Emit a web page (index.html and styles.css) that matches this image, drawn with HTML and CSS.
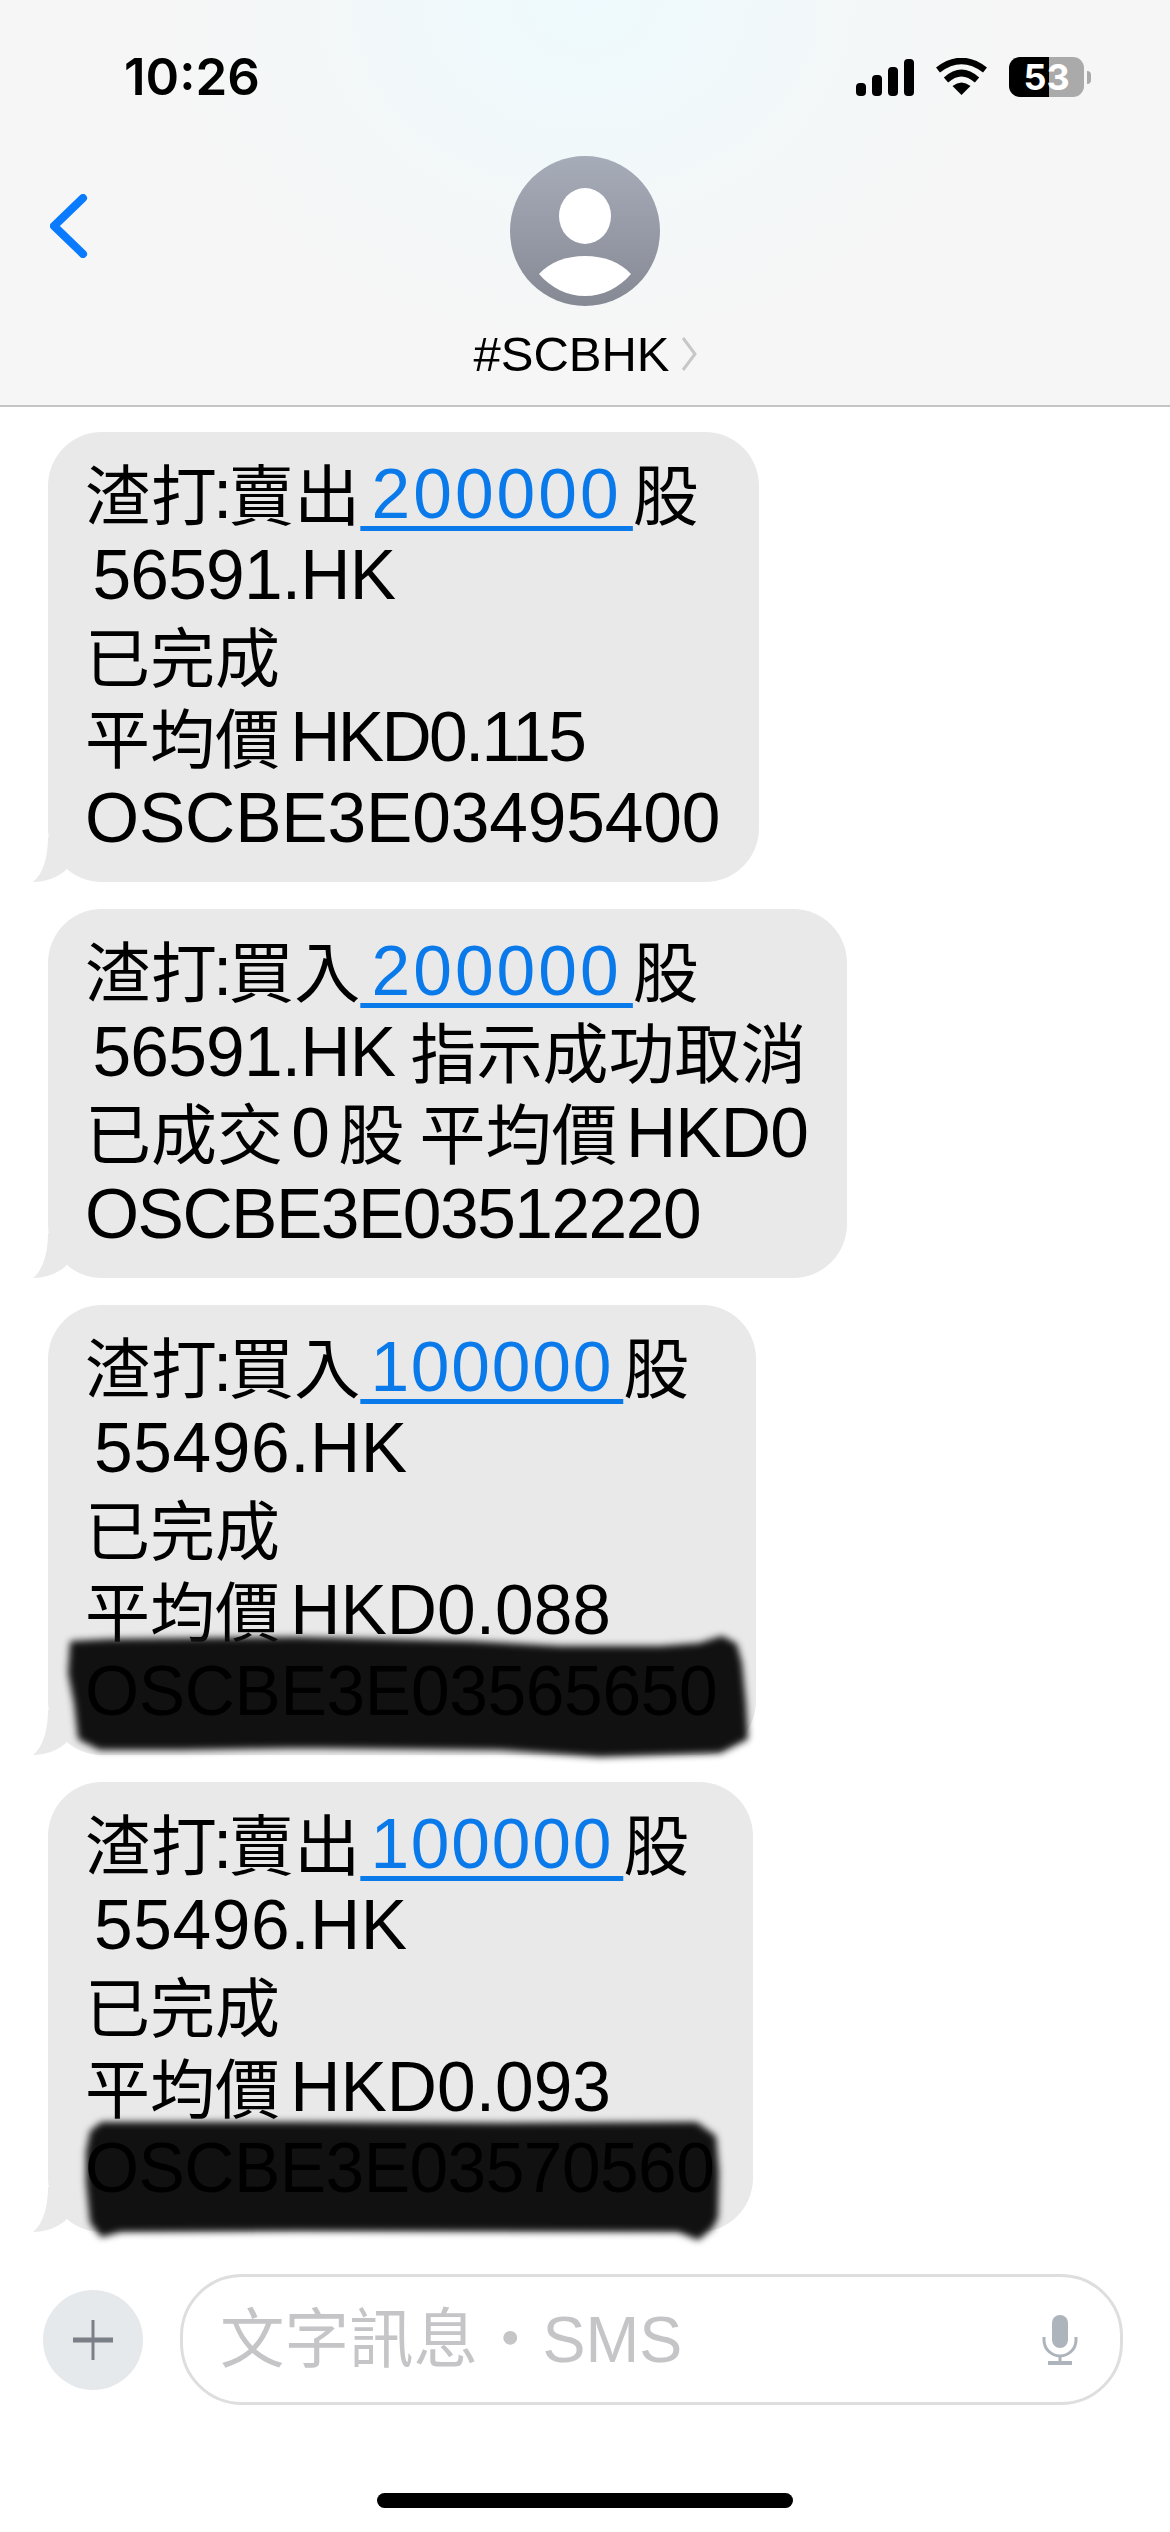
FILE: index.html

```html
<!DOCTYPE html>
<html>
<head>
<meta charset="utf-8"/>
<title>#SCBHK</title>
<link rel="stylesheet" href="styles.css">
</head>
<body>
<div class="phone">

<div class="header">
  <div class="status-bar">
    <div class="time">10:26</div>
    <div class="status-icons">
      <div class="signal"><i class="bar1"></i><i class="bar2"></i><i class="bar3"></i><i class="bar4"></i></div>
      <svg class="wifi" viewBox="0 0 51 38" width="51" height="38">
        <path d="M2 12 Q25.5 -6 49 12" fill="none" stroke="#000" stroke-width="6.5"/>
        <path d="M10 22 Q25.5 8 41 22" fill="none" stroke="#000" stroke-width="6.5"/>
        <path d="M25.5 37 L16.5 28 Q25.5 21 34.5 28 Z" fill="#000"/>
      </svg>
      <div class="battery">
        <div class="battery-body">53</div>
        <div class="battery-nub"></div>
      </div>
    </div>
  </div>
  <div class="nav">
    <svg class="back" viewBox="0 0 40 64" width="40" height="64">
      <path d="M33 4 L4 32 L33 60" fill="none" stroke="#0a7aff" stroke-width="8" stroke-linecap="round" stroke-linejoin="round"/>
    </svg>
    <div class="contact">
      <svg class="avatar" viewBox="0 0 150 150" width="150" height="150">
        <defs>
          <linearGradient id="avatar-bg" x1="0" y1="0" x2="0" y2="1">
            <stop offset="0" stop-color="#a7acb9"/>
            <stop offset="1" stop-color="#858994"/>
          </linearGradient>
        </defs>
        <circle cx="75" cy="75" r="75" fill="url(#avatar-bg)"/>
        <ellipse cx="75" cy="60" rx="26" ry="28" fill="#fff"/>
        <path d="M29 118 C40 106 56 100 75 100 C94 100 110 106 121 118 C109 132 93 140 75 140 C57 140 41 132 29 118 Z" fill="#fff"/>
      </svg>
      <div class="contact-name">
        <span>#SCBHK</span>
        <svg viewBox="0 0 18 36" width="18" height="36">
          <path d="M3 2 L15 18 L3 34" fill="none" stroke="#c7c7c9" stroke-width="3"/>
        </svg>
      </div>
    </div>
  </div>
</div>

<div class="messages">

  <div class="bubble">
    <svg class="tail" viewBox="0 0 40 45" width="40" height="45"><path d="M15 0 C15 20 10 37 0 45 C12 45 24 41 33 33 L40 0 Z"/></svg>
    <div><span class="zh">渣打</span><span class="colon">:</span><span class="zh">賣出</span><span class="link"> 200000 </span><span class="zh">股</span></div>
    <div class="tight-2"> 56591.HK</div>
    <div><span class="zh short">已完成</span></div>
    <div class="price"><span class="zh short">平均價</span> <span class="tight-5">HKD0.115</span></div>
    <div class="code-1">OSCBE3E03495400</div>
  </div>

  <div class="bubble">
    <svg class="tail" viewBox="0 0 40 45" width="40" height="45"><path d="M15 0 C15 20 10 37 0 45 C12 45 24 41 33 33 L40 0 Z"/></svg>
    <div><span class="zh">渣打</span><span class="colon">:</span><span class="zh">買入</span><span class="link"> 200000 </span><span class="zh">股</span></div>
    <div><span class="tight-2"> 56591.HK</span> <span class="zh gap">指示成功取消</span></div>
    <div><span class="zh">已成交</span> 0 <span class="zh">股</span> <span class="zh gap">平均價</span> <span class="tight-2">HKD0</span></div>
    <div class="code-2">OSCBE3E03512220</div>
  </div>

  <div class="bubble">
    <svg class="tail" viewBox="0 0 40 45" width="40" height="45"><path d="M15 0 C15 20 10 37 0 45 C12 45 24 41 33 33 L40 0 Z"/></svg>
    <svg class="redact" viewBox="0 0 760 160" width="760" height="160">
      <polygon points="34,38 72,36 262,34 432,38 522,43 622,43 662,40 684,33 697,40 702,58 706,98 708,133 682,146 562,150 462,143 262,141 142,143 62,143 42,133 38,98 32,68"/>
    </svg>
    <div><span class="zh">渣打</span><span class="colon">:</span><span class="zh">買入</span><span class="link link-one"> 100000 </span><span class="zh">股</span></div>
    <div class="loose"> 55496.HK</div>
    <div><span class="zh short">已完成</span></div>
    <div class="price"><span class="zh short">平均價</span> HKD0.088</div>
    <div class="over code-3">OSCBE3E03565650</div>
  </div>

  <div class="bubble">
    <svg class="tail" viewBox="0 0 40 45" width="40" height="45"><path d="M15 0 C15 20 10 37 0 45 C12 45 24 41 33 33 L40 0 Z"/></svg>
    <svg class="redact" viewBox="0 0 760 160" width="760" height="160">
      <polygon points="64,42 262,42 462,43 658,42 676,55 679,90 678,135 673,145 660,156 640,148 262,147 82,148 64,153 54,140 50,100 50,70 54,50"/>
    </svg>
    <div><span class="zh">渣打</span><span class="colon">:</span><span class="zh">賣出</span><span class="link link-one"> 100000 </span><span class="zh">股</span></div>
    <div class="loose"> 55496.HK</div>
    <div><span class="zh short">已完成</span></div>
    <div class="price"><span class="zh short">平均價</span> HKD0.093</div>
    <div class="over code-4">OSCBE3E03570560</div>
  </div>

</div>

<div class="composer">
  <div class="plus-btn">
    <svg viewBox="0 0 40 40" width="40" height="40">
      <path d="M20 0 V40" stroke="#7b8088" stroke-width="3" fill="none"/>
      <path d="M0 20 H40" stroke="#7b8088" stroke-width="5" fill="none"/>
    </svg>
  </div>
  <div class="input">
    <span class="placeholder">文字訊息・SMS</span>
    <svg class="mic" viewBox="0 0 36 50" width="36" height="50">
      <rect x="10" y="0" width="16" height="33" rx="8" fill="#aeb4bb"/>
      <path d="M2 22 V25 A16 16 0 0 0 34 25 V22" fill="none" stroke="#aeb4bb" stroke-width="3"/>
      <path d="M18 41 V47" stroke="#aeb4bb" stroke-width="3"/>
      <rect x="6" y="46" width="24" height="4" fill="#aeb4bb"/>
    </svg>
  </div>
</div>

<div class="home-area"><div class="home-indicator"></div></div>

</div>
</body>
</html>
```

FILE: styles.css

```css
html, body { margin: 0; padding: 0; background: #fff; }
body { font-family: "Liberation Sans", "Noto Sans CJK TC", sans-serif; color: #000; }

.phone {
  width: 1170px; height: 2532px; overflow: hidden;
  display: flex; flex-direction: column;
}

/* header */
.header {
  flex: none; height: 405px;
  border-bottom: 2px solid #c4c4c4;
  background: radial-gradient(ellipse 420px 340px at 50% 0, #eefafd, #f6f6f6);
}
.status-bar {
  display: flex; justify-content: space-between; align-items: center;
  height: 40px; padding: 57px 79px 0 124px;
}
.time { font-family: Inter, sans-serif; font-size: 51px; font-weight: 600; line-height: 40px; }
.status-icons { display: flex; align-items: center; gap: 22px; }
.signal { display: flex; align-items: flex-end; gap: 6px; height: 38px; }
.signal i { display: block; width: 10px; background: #000; border-radius: 4px; }
.signal .bar1 { height: 13px; }
.signal .bar2 { height: 21px; }
.signal .bar3 { height: 29px; }
.signal .bar4 { height: 37px; }
.battery { display: flex; align-items: center; gap: 3px; }
.battery-body {
  width: 75px; height: 40px; border-radius: 11px;
  background: linear-gradient(90deg, #000 53%, #aaa 53%);
  color: #fff; font-family: Inter, sans-serif; font-size: 36px; font-weight: 700;
  line-height: 40px; text-align: center;
}
.battery-nub { width: 4px; height: 13px; background: #aaa; border-radius: 0 4px 4px 0; }

.nav {
  display: grid; grid-template-columns: 1fr auto 1fr;
  margin-top: 59px; padding-left: 50px;
}
.back { margin-top: 38px; }
.contact { display: flex; flex-direction: column; align-items: center; margin-left: -49px; }
.contact-name {
  display: flex; align-items: center; gap: 10px;
  margin-top: 20px; font-size: 49px; line-height: 56px;
}

/* message list */
.messages {
  flex: 1; display: flex; flex-direction: column; align-items: flex-start;
  gap: 27px; padding: 25px 0 0 48px;
}
.bubble {
  position: relative;
  padding: 22px 39px 23px 37px;
  background: #e9e9ea; border-radius: 54px;
  font-size: 69.5px; line-height: 81px;
}
.bubble > div { height: 81px; white-space: pre; word-spacing: -11px; }
.bubble > .price { word-spacing: -9px; }
.zh { font-size: 66px; vertical-align: -2px; }
.short { font-size: 65px; }
.gap { margin-left: 7px; }
.colon { margin: 0 -4px; }
.tail { position: absolute; left: -15px; bottom: 0; fill: #e9e9ea; }
.link {
  color: #0a7aeb; letter-spacing: 3px;
  text-decoration: underline; text-decoration-thickness: 5px; text-underline-offset: 8px;
}
.link-one { letter-spacing: 1.8px; }
.loose { letter-spacing: .6px; }
.tight-2 { letter-spacing: -.8px; }
.tight-5 { letter-spacing: -2.7px; }
.code-1 { letter-spacing: -.15px; }
.code-2 { letter-spacing: -1.5px; }
.code-3 { letter-spacing: -.35px; }
.code-4 { letter-spacing: -.55px; }
.redact {
  position: absolute; left: -10px; bottom: -10px; overflow: visible;
  fill: #111; stroke: #111; stroke-width: 4px; stroke-linejoin: round;
  filter: blur(3.5px);
}
.bubble > .over { position: relative; }

/* composer */
.composer {
  flex: none; display: flex; align-items: center; gap: 37px;
  margin-bottom: 88px; padding: 0 47px 0 43px;
}
.plus-btn {
  flex: none; display: flex; align-items: center; justify-content: center;
  width: 100px; height: 100px; border-radius: 50%; background: #e6e9eb;
}
.input {
  flex: 1; display: flex; align-items: center; justify-content: space-between;
  box-sizing: border-box; height: 131px; padding: 0 42px 0 37px;
  border: 3px solid #dedede; border-radius: 62px;
}
.placeholder { color: #c5c5c7; font-size: 64.5px; line-height: 70px; }

.home-area { flex: none; display: flex; justify-content: center; padding-bottom: 24px; }
.home-indicator { width: 416px; height: 15px; background: #000; border-radius: 8px; }
```
